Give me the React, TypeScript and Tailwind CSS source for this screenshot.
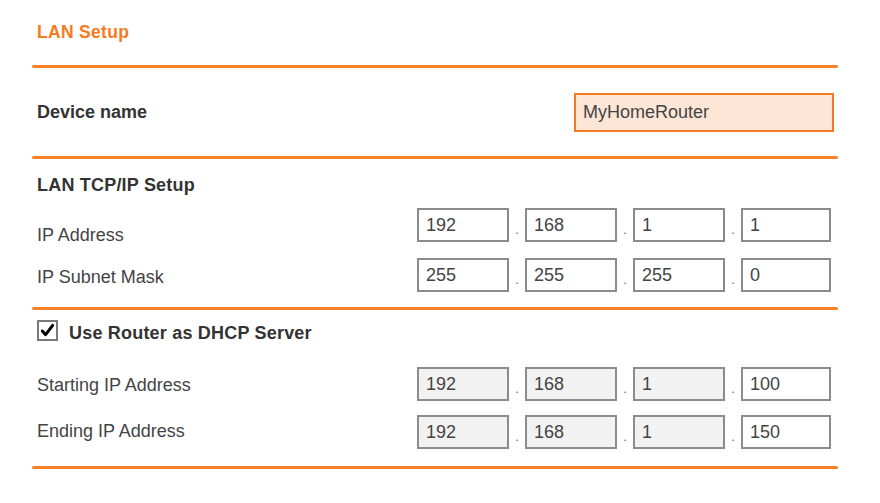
import React from "react"

const font = { fontFamily: '"Liberation Sans", Arial, sans-serif' }

function Line() {
  return <div className="h-[3px] w-full rounded-full bg-[#f5822a]" />
}

function Octet({ value, disabled, last }: { value: string; disabled?: boolean; last?: boolean }) {
  return (
    <div
      className={`flex h-[34px] items-center border-2 border-[#8c8c8c] pl-[7px] text-[18px] text-[#444] ${
        last ? "w-[90px]" : "w-[92px]"
      } ${disabled ? "bg-[#f2f2f2]" : "bg-white"}`}
    >
      {value}
    </div>
  )
}

function Dot() {
  return (
    <div className="flex h-[34px] w-[16px] items-end justify-center pb-[6px] text-[13px] leading-none text-[#666]">
      .
    </div>
  )
}

function IpRow({
  label,
  values,
  disabledCount = 0,
  labelPad,
  className = "",
}: {
  label: string
  values: string[]
  disabledCount?: number
  labelPad: string
  className?: string
}) {
  return (
    <div className={`flex h-[34px] items-start ${className}`}>
      <div className={`w-[380px] text-[18px] leading-[20px] text-[#444] ${labelPad}`}>{label}</div>
      <div className="flex">
        {values.map((v, i) => (
          <React.Fragment key={i}>
            {i > 0 && <Dot />}
            <Octet value={v} disabled={i < disabledCount} last={i === 3} />
          </React.Fragment>
        ))}
      </div>
    </div>
  )
}

export default function App() {
  return (
    <div className="h-[503px] w-[880px] bg-white" style={font}>
      <div className="w-[806px] ml-[32px] flex flex-col">
        {/* タイトル */}
        <div className="flex h-[65px] items-center pl-[5px] text-[17.5px] font-bold tracking-[0.3px] text-[#f47b20]">
          LAN Setup
        </div>
        <Line />

        {/* デバイス名 */}
        <div className="flex h-[88px] items-center justify-between pl-[5px] pr-[4px]">
          <div className="text-[18px] font-bold text-[#333]">Device name</div>
          <div className="flex h-[39px] w-[260px] items-center border-2 border-[#f47b20] bg-[#fde6d6] pl-[7px] text-[18px] text-[#444]">
            MyHomeRouter
          </div>
        </div>
        <Line />

        {/* LAN TCP/IP */}
        <div className="h-[49px] pl-[5px] pt-[16px] text-[18px] font-bold leading-[20px] tracking-[0.2px] text-[#333]">
          LAN TCP/IP Setup
        </div>
        <div className="pl-[5px]">
          <IpRow label="IP Address" values={["192", "168", "1", "1"]} labelPad="pt-[17px]" />
          <IpRow
            label="IP Subnet Mask"
            values={["255", "255", "255", "0"]}
            labelPad="pt-[9px]"
            className="mt-[16px]"
          />
        </div>
        <div className="mt-[15px]">
          <Line />
        </div>

        {/* DHCP */}
        <div className="flex h-[57px] items-start gap-[11px] pl-[5px] pt-[10px]">
          <div className="flex h-[21px] w-[21px] items-center justify-center border-2 border-[#7a7a7a] bg-white">
            <svg viewBox="0 0 16 16" className="h-[15px] w-[15px]">
              <path d="M2.5 8.5 L6 12.5 L13.5 2.5" fill="none" stroke="#000" strokeWidth={3.2} strokeLinecap="round" strokeLinejoin="round" />
            </svg>
          </div>
          <div className="pt-[3px] text-[18px] font-bold leading-[20px] tracking-[0.2px] text-[#333]">
            Use Router as DHCP Server
          </div>
        </div>
        <div className="pl-[5px]">
          <IpRow
            label="Starting IP Address"
            values={["192", "168", "1", "100"]}
            disabledCount={3}
            labelPad="pt-[8px]"
          />
          <IpRow
            label="Ending IP Address"
            values={["192", "168", "1", "150"]}
            disabledCount={3}
            labelPad="pt-[6px]"
            className="mt-[14px]"
          />
        </div>
        <div className="mt-[17px]">
          <Line />
        </div>
      </div>
    </div>
  )
}
